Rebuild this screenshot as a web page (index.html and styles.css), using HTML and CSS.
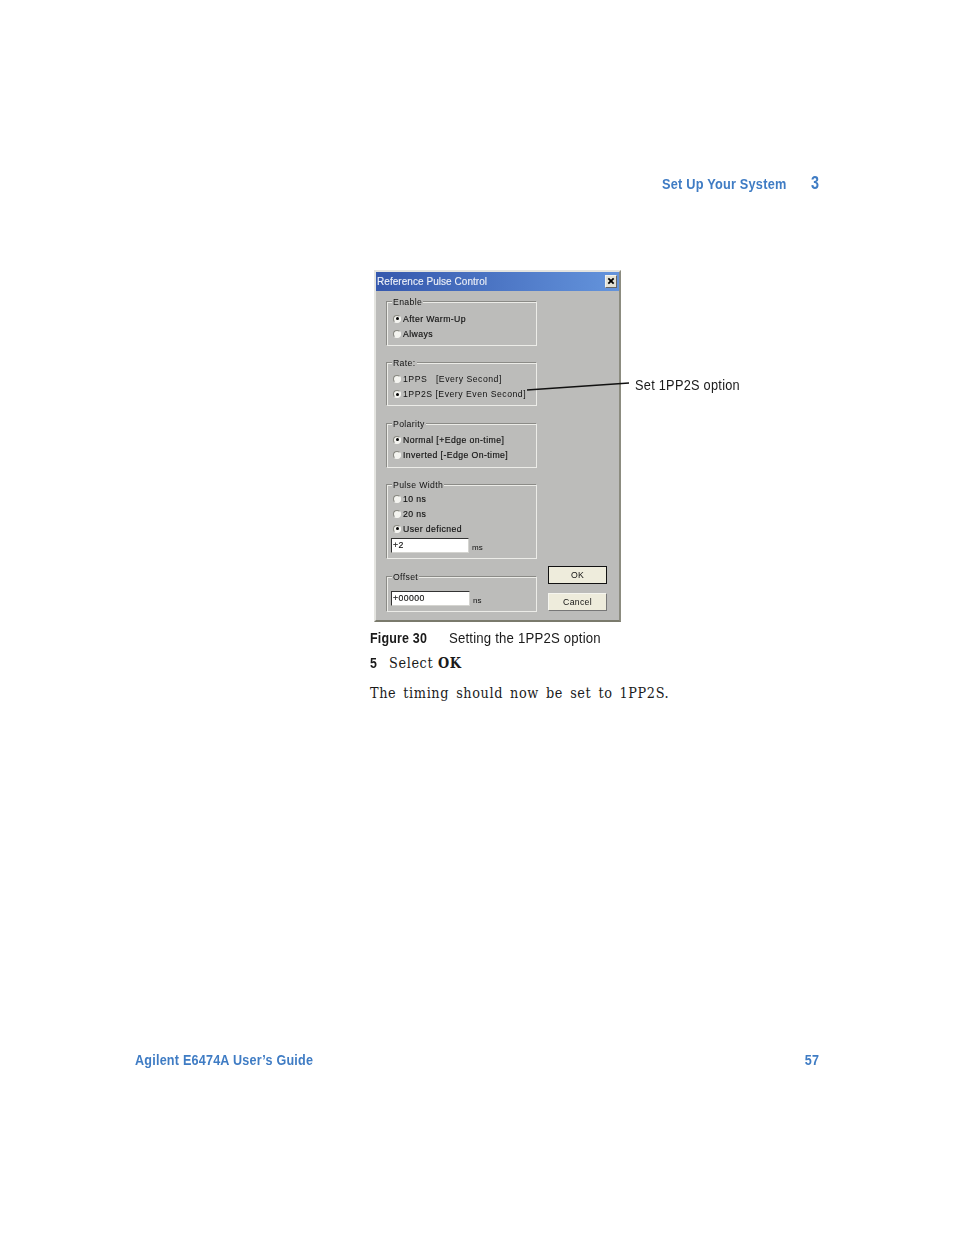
FILE: index.html
```html
<!DOCTYPE html>
<html lang="en">
<head>
<meta charset="utf-8">
<title>Set Up Your System</title>
<link rel="stylesheet" href="styles.css">
</head>
<body>
<div class="page">
  <header class="running-head">
    <span class="head-title">Set Up Your System</span>
    <span class="head-chapter">3</span>
  </header>
  <main class="content">
    <figure class="figure">
      <div class="dialog">
        <div class="titlebar">
          <span class="title-text">Reference Pulse Control</span>
          <span class="close-btn"><svg width="8" height="8" viewBox="0 0 9 9"><path d="M1.5 1.5 7.5 7.5M7.5 1.5 1.5 7.5" stroke="#000" stroke-width="2"/></svg></span>
        </div>
        <div class="dialog-body">
          <div class="groups">
            <fieldset class="group group-enable">
              <legend>Enable</legend>
              <div class="radio-row"><span class="radio checked"></span>After Warm-Up</div>
              <div class="radio-row"><span class="radio"></span>Always</div>
            </fieldset>
            <fieldset class="group group-rate">
              <legend>Rate:</legend>
              <div class="radio-row"><span class="radio"></span><span class="wide">1PPS&nbsp;&nbsp;&nbsp;[Every Second]</span></div>
              <div class="radio-row"><span class="radio checked"></span><span class="wide">1PP2S [Every Even Second]</span></div>
            </fieldset>
            <fieldset class="group group-polarity">
              <legend>Polarity</legend>
              <div class="radio-row"><span class="radio checked"></span>Normal [+Edge on-time]</div>
              <div class="radio-row"><span class="radio"></span>Inverted [-Edge On-time]</div>
            </fieldset>
            <fieldset class="group group-width">
              <legend>Pulse Width</legend>
              <div class="radio-row"><span class="radio"></span>10 ns</div>
              <div class="radio-row"><span class="radio"></span>20 ns</div>
              <div class="radio-row"><span class="radio checked"></span>User deficned</div>
              <div class="field-row"><span class="field field-short">+2</span><span class="unit">ms</span></div>
            </fieldset>
            <fieldset class="group group-offset">
              <legend>Offset</legend>
              <div class="field-row"><span class="field field-long">+00000</span><span class="unit">ns</span></div>
            </fieldset>
          </div>
          <div class="buttons">
            <span class="btn btn-default">OK</span>
            <span class="btn">Cancel</span>
          </div>
        </div>
      </div>
      <svg class="callout-line" width="110" height="14" viewBox="0 0 110 14"><line x1="1" y1="12" x2="103" y2="5" stroke="#111" stroke-width="1.4"/></svg>
      <span class="callout-label">Set 1PP2S option</span>
      <figcaption class="caption"><b class="caption-num">Figure 30</b><span class="caption-text">Setting the 1PP2S option</span></figcaption>
    </figure>
    <p class="step"><b class="step-num">5</b><span>Select <b>OK</b></span></p>
    <p class="para">The timing should now be set to 1PP2S.</p>
  </main>
  <footer class="running-foot">
    <span class="foot-title">Agilent E6474A User’s Guide</span>
    <span class="foot-page">57</span>
  </footer>
</div>
</body>
</html>
```
FILE: styles.css
```css
* { box-sizing: border-box; }
html, body { margin: 0; padding: 0; background: #fff; }
.page {
  width: 954px;
  height: 1235px;
  padding: 174px 135px 0;
  display: flex;
  flex-direction: column;
  font-family: "Liberation Sans", sans-serif;
  color: #1a1a1a;
}
.running-head {
  display: flex;
  justify-content: flex-end;
  align-items: center;
  gap: 25px;
  height: 18px;
  color: #3f7cc4;
  font-weight: 700;
}
.head-title {
  font-size: 15px;
  letter-spacing: 0.25px;
  white-space: nowrap;
  transform: scaleX(0.85);
  transform-origin: right center;
}
.head-chapter {
  font-size: 18px;
  width: 8px;
  transform: scaleX(0.8);
  transform-origin: left center;
}
.content { margin: 78px 0 0 235px; }
.figure { margin: 0; position: relative; }
.dialog {
  width: 247px;
  height: 352px;
  margin-left: 4px;
  background: #bcbcba;
  border: 2px solid #e4e4e0;
  border-right-color: #8c8c80;
  border-bottom-color: #7a7a6c;
  font-family: "Liberation Sans", sans-serif;
  font-size: 8.7px;
  filter: blur(0.3px);
  color: #111;
  -webkit-text-stroke: 0.15px #111;
}
.titlebar {
  height: 19px;
  background: linear-gradient(90deg, #3558ad, #6494dc);
  color: #eef1f8;
  -webkit-text-stroke: 0.1px #eef1f8;
  display: flex;
  align-items: center;
  justify-content: space-between;
  padding: 0 2px 1px 1px;
  font-size: 10px;
  letter-spacing: 0.05px;
}
.close-btn {
  width: 12px;
  height: 13px;
  background: #e4e2d6;
  display: flex;
  align-items: center;
  justify-content: center;
  border: 1px solid #f2f2ec;
  border-right-color: #666;
  border-bottom-color: #666;
}
.dialog-body {
  display: flex;
  justify-content: space-between;
  padding: 11px 12px 0 11px;
}
.groups { width: 150px; display: flex; flex-direction: column; }
.group {
  margin: 0;
  padding: 2px 0 0 5px;
  border: 1px solid #ecece8;
  box-shadow: -1px -1px 0 #8b8b87;
  border-radius: 0;
  min-width: 0;
}
.group legend {
  margin-left: -1px;
  padding: 0 1px;
  background: #bcbcba;
  font-size: 8.7px;
  line-height: 11px;
  letter-spacing: 0.35px;
  -webkit-text-stroke: 0;
}
.group-enable { height: 49px; margin-top: -5px; padding-top: 3px; }
.group-rate { height: 48px; margin-top: 12px; }
.group-polarity { height: 49px; margin-top: 13px; }
.group-width { height: 79px; margin-top: 12px; padding-top: 0; }
.group-width .radio-row { height: 15px; }
.group-offset { height: 40px; margin-top: 13px; }
.radio-row {
  display: flex;
  align-items: center;
  gap: 2px;
  height: 15.5px;
  white-space: nowrap;
  letter-spacing: 0.42px;
}
.wide { letter-spacing: 0.5px; -webkit-text-stroke: 0; }
.radio {
  width: 8px;
  height: 8px;
  border-radius: 50%;
  background: #f4f4f0;
  border: 1px solid #f4f4f0;
  border-top-color: #86867f;
  border-left-color: #86867f;
  flex: none;
  position: relative;
}
.radio.checked::after {
  content: "";
  position: absolute;
  left: 1.5px;
  top: 1.5px;
  width: 3px;
  height: 3px;
  border-radius: 50%;
  background: #000;
}
.field-row { display: flex; align-items: center; gap: 3px; margin-left: -2px; }
.group-width .field-row { margin-top: 2px; }
.group-offset .field-row { margin-top: 6px; }
.field {
  height: 15px;
  background: #fff;
  border: 1px solid #333;
  border-right-color: #d4d4d0;
  border-bottom-color: #d4d4d0;
  line-height: 13px;
  padding-left: 1px;
  letter-spacing: 0.4px;
}
.field-short { width: 78px; }
.field-long { width: 79px; }
.unit { font-size: 8px; margin-top: 3px; -webkit-text-stroke: 0; }
.buttons {
  width: 59px;
  margin-top: 264px;
  display: flex;
  flex-direction: column;
  gap: 9px;
}
.btn {
  height: 18px;
  background: #eeecdc;
  display: flex;
  align-items: center;
  justify-content: center;
  border: 1px solid #f6f6f0;
  border-right-color: #777;
  border-bottom-color: #777;
  letter-spacing: 0.3px;
  -webkit-text-stroke: 0;
}
.btn-default { border: 1px solid #111; }
.callout-line { position: absolute; left: 156px; top: 108px; }
.callout-label {
  position: absolute;
  left: 265px;
  top: 106px;
  font-size: 14.5px;
  line-height: 18px;
  letter-spacing: 0.3px;
  white-space: nowrap;
  transform: scaleX(0.88);
  transform-origin: left center;
}
.caption {
  display: flex;
  gap: 13px;
  margin-top: 7px;
  font-size: 14.5px;
  line-height: 18px;
  letter-spacing: 0.2px;
}
.caption-num { transform: scaleX(0.86); transform-origin: left center; }
.caption-text { transform: scaleX(0.91); transform-origin: left center; }
.step, .para {
  font-family: "DejaVu Serif Condensed", "Liberation Serif", serif;
  font-size: 14.3px;
  line-height: 18px;
  margin: 7px 0 0;
  letter-spacing: 0.6px;
}
.step { display: flex; gap: 11px; }
.step-num {
  font-family: "Liberation Sans", sans-serif;
  font-size: 14.5px;
  letter-spacing: 0;
  transform: scaleX(0.85);
  transform-origin: left center;
}
.para { margin-top: 12px; word-spacing: 2.4px; }
.running-foot {
  margin-top: auto;
  margin-bottom: 167px;
  height: 18px;
  display: flex;
  justify-content: space-between;
  align-items: center;
  color: #3f7cc4;
  font-weight: 700;
  font-size: 15px;
  letter-spacing: 0.25px;
}
.foot-title { transform: scaleX(0.84); transform-origin: left center; white-space: nowrap; }
.foot-page { transform: scaleX(0.84); transform-origin: right center; }
```
